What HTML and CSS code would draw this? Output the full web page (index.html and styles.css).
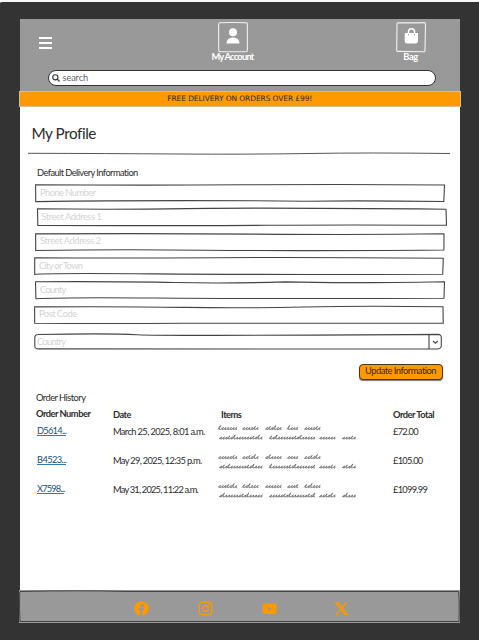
FILE: index.html
```
<!DOCTYPE html>
<html lang="en">
<head>
<meta charset="utf-8">
<title>My Profile</title>
<link rel="stylesheet" href="styles.css">
</head>
<body>
<div class="device">
<div class="screen">
  <header class="header">
    <div class="nav">
      <svg class="burger" viewBox="0 0 13 12"><path d="M0 1h13M0 6h13M0 11h13"/></svg>
      <div class="nav-item account">
        <svg class="tile" viewBox="0 0 30 31"><path class="tile-line" d="M2 .8Q15 .3 28.5.8Q29.6 1 29.3 3L29.4 28Q29.3 29.7 27.5 29.7L2 29.8Q.6 29.6.7 28L.6 3Q.7 1 2 .8Z"/><circle cx="15" cy="10.300" r="4"/><path d="M8.500 21.500C8.500 13.500 21.500 13.500 21.500 21.500Z"/></svg>
        <span class="t-account">My Account</span>
      </div>
      <div class="nav-item bag">
        <svg class="tile" viewBox="0 0 30 31"><path class="tile-line" d="M2 .8Q15 1.100 28.500.6Q29.600 1 29.500 3L29 28Q29.300 29.700 27.500 29.700L2 29.400Q.6 29.600.7 28L1 3Q.7 1 2 .8Z"/><path d="M9.500 11H22V18.500Q22 21.500 19.500 21.500H11Q8.700 21.500 8.700 18.500V12Q8.700 11 9.500 11Z"/><path class="handle" d="M12.500 13V9.500C12.500 5.800 18.500 5.800 18.500 9.500V13"/><path class="handle-dots" d="M12.500 12v1.500M18.500 12v1.500"/></svg>
        <span class="t-bag">Bag</span>
      </div>
    </div>
    <div class="search">
      <svg class="glass" viewBox="0 0 8 8"><circle cx="3.300" cy="3.300" r="2.600"/><path d="M5.200 5.200L7.500 7.500"/></svg>
      <span class="t-search">search</span>
    </div>
  </header>
  <div class="banner"><span>FREE DELIVERY ON ORDERS OVER £99!</span></div>
  <main class="main">
    <h1>My Profile</h1>
    <svg class="rule" viewBox="0 0 422 3"><path d="M0 1.300Q80 1.500 150 2T280 1.500T422 1.500"/></svg>
    <h2>Default Delivery Information</h2>
    <form class="fields">
      <div class="field"><svg viewBox="0 0 410 18"><path d="M.6.7Q100 1.500 210 .8T409.500 1L408.800 17.500Q330 16.500 270 17.200Q130 15.800 .7 17.600Z"/></svg><span class="t-phone">Phone Number</span></div>
      <div class="field right"><svg viewBox="0 0 410 18"><path d="M.5.8Q80 1.700 150 .6T409 1.200L409.500 17.200Q300 16.700 230 17.300T.8 17.500Z"/></svg><span class="t-street">Street Address 1</span></div>
      <div class="field"><svg viewBox="0 0 410 18"><path d="M.6.9Q110 .3 220 1.100T409 .8L408.900 17Q260 18.200 170 17.200T.7 17.500Z"/></svg><span class="t-street2">Street Address 2</span></div>
      <div class="field left"><svg viewBox="0 0 410 18"><path d="M.7.8Q90 1.300 180 .7T409.300 1.200L408.700 17.200Q230 17.800 120 16.900T.7 17.500Z"/></svg><span class="t-city">City or Town</span></div>
      <div class="field"><svg viewBox="0 0 410 18"><path d="M.5.7Q90 .3 140 1.500T250 .9Q310 2.500 409.500.7L409 17.200Q210 17.800 120 17T.9 17.700Z"/></svg><span class="t-county">County</span></div>
      <div class="field left"><svg viewBox="0 0 410 18"><path d="M.6.9Q90 .4 150 1.400T270 1T409 .8L409.200 17.300Q220 16.700 150 17.200T.7 17.300Z"/></svg><span class="t-post">Post Code</span></div>
      <div class="field select"><svg viewBox="0 0 408 17"><path d="M4 1.500Q75 .2 103 1.700T404 1.400Q407.500 1.500 407.300 5V13Q407 16 403 16Q205 16.400 4 15.900Q.6 16 .8 12V5Q.8 1.500 4 1.500M395 1.500V16"/><path d="M399 8L401.400 10.200L403.800 8"/></svg><span class="t-country">Country</span></div>
    </form>
    <div class="button"><span class="t-update">Update Information</span></div>
    <h3>Order History</h3>
    <div class="orders">
      <div class="row head"><b class="t-num">Order Number</b><b class="t-date">Date</b><b class="t-items">Items</b><b class="t-total">Order Total</b></div>
      <div class="row"><a class="n1">D5614...</a><span class="d1">March 25, 2025, 8:01 a.m.</span><svg class="scribble" viewBox="0 0 140 17"></svg><span class="price">£72.00</span></div>
      <div class="row"><a class="n2">B4523...</a><span class="d2">May 29, 2025, 12:35 p.m.</span><svg class="scribble" viewBox="0 0 140 17"></svg><span class="price">£105.00</span></div>
      <div class="row"><a class="n3">X7598...</a><span class="d3">May 31, 2025, 11:22 a.m.</span><svg class="scribble" viewBox="0 0 140 17"></svg><span class="price">£1099.99</span></div>
    </div>
  </main>
  <footer class="footer">
    <svg class="footer-line" viewBox="0 0 441 33"><path d="M1 1.500Q60 .2 110 1.500H439.500Q440.500 8 440 31.500H1Q.2 20 .7 3Z"/></svg>
    <svg class="icon" viewBox="0 0 15 15"><circle cx="7.500" cy="7.500" r="7.300"/><path class="cut" d="M6.200 15V9.300H4.400V7.200H6.200V5.700Q6.200 3 8.700 3H10.200V4.900H9.300Q8.400 4.900 8.400 5.900V7.200H10.200L9.800 9.300H8.400V15Z"/></svg>
    <svg class="icon" viewBox="0 0 15 15"><rect class="line" x="1.300" y="1.300" width="12.400" height="12.400" rx="3.300"/><circle class="line" cx="7.500" cy="7.500" r="2.800"/><circle cx="11" cy="4" r=".9"/></svg>
    <svg class="icon" viewBox="0 0 15 15"><rect x=".5" y="2.600" width="14.200" height="10.300" rx="2.500"/><path class="cut" d="M6 5.500L9.800 7.700L6 9.900Z"/></svg>
    <svg class="icon x" viewBox="0 0 15 15"><path class="line" d="M1.800 1.800H4.300L13.200 13.200H10.700ZM12.800 1.200L8.500 6.400M6.400 8.900L2 13.800"/></svg>
  </footer>
</div>
</div>
<script src="scribble.js"></script>
</body>
</html>
```
FILE: styles.css
```
* { box-sizing: border-box; }
body { margin: 0; width: 479px; height: 640px; background: #fff; font-family: Lato, "Noto Sans", sans-serif; font-size: 9.3px; color: #2b2b2b; overflow: hidden; }
svg { display: block; fill: none; overflow: visible; }
span, b, a, h1, h2, h3 { white-space: nowrap; }
.device { height: 640px; padding: 17px 19px 17px 19.500px; background: #333; border-top: 2px solid #f7f7f7; border-radius: 3px 2px 0 0; }
.screen { height: 604px; background: #fff; display: flex; flex-direction: column; }

.header { height: 72px; background: #999; }
.nav { height: 51px; display: grid; grid-template-columns: 185px 56px 122px 56px; padding-top: 3px; }
.burger { width: 13px; height: 12px; margin: 15px 0 0 19px; stroke: #fff; stroke-width: 2; }
.nav-item { display: flex; flex-direction: column; align-items: center; color: #fff; font-weight: 700; line-height: 10px; letter-spacing: -.75px; }
.nav-item span { margin-top: -1px; }
.bag { grid-column: 4; letter-spacing: -.4px; }
.tile { width: 30px; height: 31px; fill: #fff; }
.tile-line { fill: none; stroke: #f2f2f2; stroke-width: 1.1; }
.handle { fill: none; stroke: #fff; stroke-width: 1.500; }
.handle-dots { fill: none; stroke: #999; stroke-width: .8; }
.search { width: 388px; height: 16px; margin-left: 28.500px; border: 1px solid #333; border-radius: 8px; background: #fff; display: flex; align-items: center; padding-left: 3px; color: #666; }
.glass { width: 8px; height: 8px; stroke: #333; stroke-width: 1.100; margin-right: 2.500px; }
.t-search { line-height: 12px; padding-bottom: 1px; letter-spacing: -.15px; }

.banner { flex: none; height: 16px; margin: 0 -1px; background: #ff9900; border: 1px solid #d8bd91; display: flex; justify-content: center; font: 7.500px/13px "DejaVu Sans", sans-serif; letter-spacing: -.1px; }

.main { flex: 1; min-height: 0; }
h1 { margin: 16px 0 0 12px; font-size: 15.300px; line-height: 20px; font-weight: 400; letter-spacing: -.45px; }
.rule { width: 422px; height: 3px; margin: 9px 0 0 8.500px; stroke: #555; }
h2 { margin: 12px 0 0 17.500px; font-size: 9.300px; line-height: 12px; font-weight: 400; letter-spacing: -.57px; }
.fields { display: grid; gap: 6.350px; margin: 5px 0 0 15.500px; }
.field { position: relative; width: 410px; height: 18px; padding: 1.500px 0 0 5px; line-height: 13px; color: #d3d3d3; }
.field svg { position: absolute; inset: 0; width: 100%; height: 100%; stroke: #444; stroke-width: 1.100; }
.field.right { margin-left: 1.500px; }
.field.left { margin-left: -1px; }
.field.select { width: 408px; height: 17px; margin: 3px 0 0 -1px; padding: 2px 0 0 3px; }
.t-phone { letter-spacing: -.53px; }
.t-street { letter-spacing: -.45px; }
.t-street2 { letter-spacing: -.4px; }
.t-city { letter-spacing: -.67px; }
.t-county { letter-spacing: -.7px; }
.t-post { letter-spacing: -.45px; }
.t-country { letter-spacing: -.7px; }
.button { width: 84px; height: 16px; margin: 14px 0 0 339px; border: 1px solid #493719; border-bottom-width: 1.500px; border-radius: 4px; background: #ff9900; box-shadow: 0 1px 1px #777; text-align: center; line-height: 12px; letter-spacing: -.5px; }
h3 { margin: 11px 0 0 16.500px; font-size: 9.300px; line-height: 14px; font-weight: 400; letter-spacing: -.53px; }

.orders { margin-left: 16.500px; }
.row { height: 29.200px; display: grid; grid-template-columns: 77px 105px 175px auto; line-height: 13px; }
.row.head { height: 20px; padding-top: 3px; letter-spacing: -.5px; }
.t-num { margin-top: -1px; }
.t-items { padding-left: 3px; }
.row a { justify-self: start; height: 12px; margin: -1px 0 0 1px; color: #135080; border-bottom: 1px solid #3578ae; }
.n1 { letter-spacing: -.75px; }
.n2 { letter-spacing: -.6px; }
.n3 { letter-spacing: -.85px; }
.d1 { letter-spacing: -.62px; }
.d2 { letter-spacing: -.68px; }
.d3 { letter-spacing: -.8px; }
.price { margin-top: -.5px; letter-spacing: -.72px; }
.scribble { width: 140px; height: 17px; margin-top: -2px; stroke: #555; stroke-width: .7; }

.footer { position: relative; flex: none; height: 33px; margin-left: -.5px; background: #999; display: grid; grid-template-columns: 64px 64px 71.500px 15px; padding: 11px 0 0 115px; }
.footer-line { position: absolute; inset: 0; width: 441px; height: 33px; stroke: #444; }
.icon { width: 15px; height: 15px; fill: #ff9900; }
.icon .cut { fill: #999; }
.icon .line { fill: none; stroke: #ff9900; stroke-width: 1.400; }
```
FILE: scribble.js
```
// Handwriting placeholders: one slanted squiggle per word.
const words = [
  [[0, 20], [24, 43], [47, 65], [69, 82], [86, 105]],
  [[1, 47], [51, 98], [101, 120], [124, 138]]
];
document.querySelectorAll('.scribble').forEach((svg, n) => {
  let d = '';
  words.forEach((line, l) => line.forEach(([from, to], w) => {
    const y = l ? 14 : 4.5;
    d += `M${from} ${y + 2}`;
    for (let x = from, i = 0; x < to - 3; x += 2.7, i++) {
      const k = (i * 7 + n * 5 + w * 3 + l) % 9;
      const tall = k === 0 ? 4 : k === 4 ? 3 : 1.9;
      d += `q1.8 ${-tall} 2.8 ${-tall}q-1.5 ${tall * .6}-1.4 ${tall}q.5.3 1.3-.3L${x + 2.7} ${y + 2}`;
    }
  }));
  svg.innerHTML = `<path d="${d}"/>`;
});
```
